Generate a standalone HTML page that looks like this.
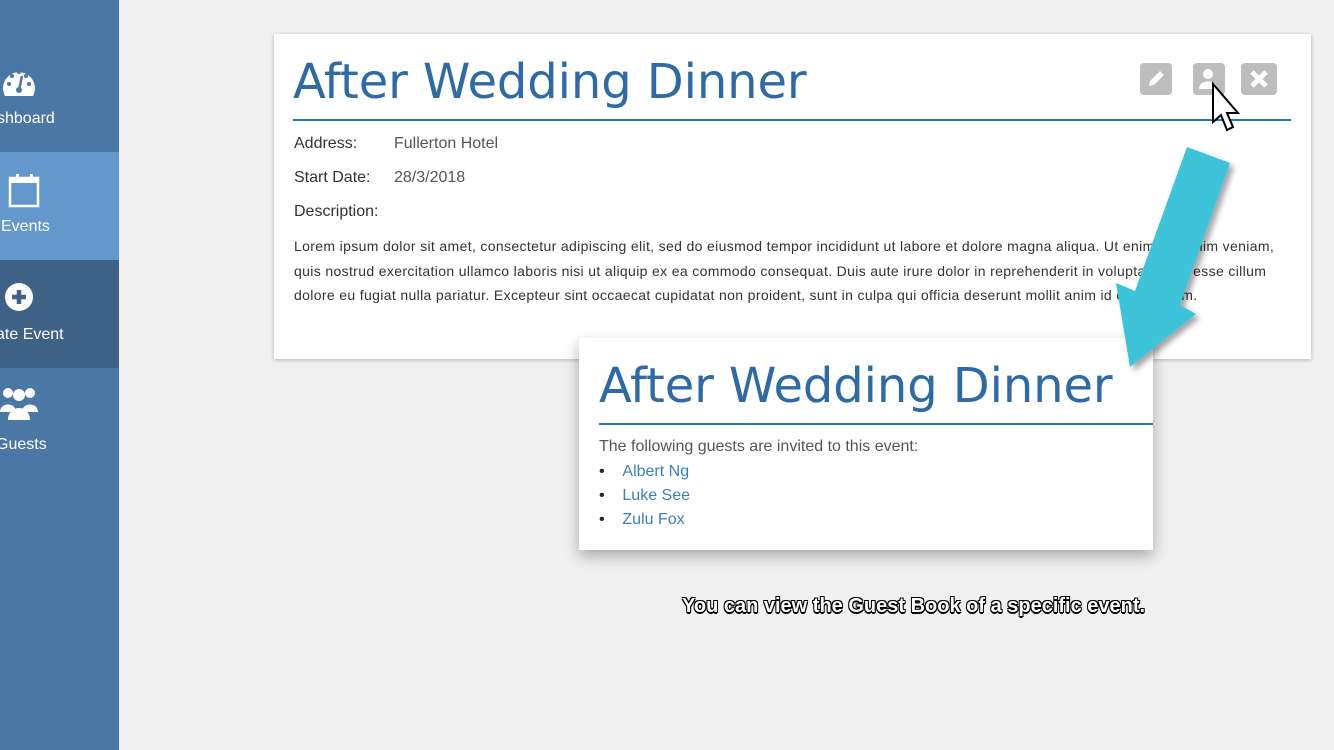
<!DOCTYPE html>
<html><head><style>
body{margin:0;width:1334px;height:750px;overflow:hidden;background:#f0f0f0;font-family:"Liberation Sans",sans-serif;position:relative}
.sb{position:absolute;left:0;top:0;width:119px;height:750px;background:#4a77a4}
.it{position:absolute;left:0;width:119px;height:108px;color:#fff;font-size:16px}
.it span{position:absolute;white-space:nowrap}
.card{position:absolute;background:#fff;box-shadow:0 1px 4px rgba(0,0,0,.25)}
h1{font-family:"DejaVu Sans","Liberation Sans",sans-serif;font-weight:normal;color:#2e6aa5;margin:0;letter-spacing:-0.1px}
.lbl{position:absolute;font-size:16px;color:#333}
.btn{position:absolute;top:63px;width:32px;height:32px;background:#bdbdbd;border-radius:4px}
</style></head><body>
<div class="sb">
 <div class="it" style="top:44px;background:#4a77a4"><svg style="position:absolute;left:2px;top:22px" width="34" height="32" viewBox="0 0 34 32"><path d="M3 30A16 16 0 1 1 31 30Z" fill="#fff"/><circle cx="17" cy="24" r="3" fill="#4a77a4"/><path d="M17 24L20 10" stroke="#4a77a4" stroke-width="2.5"/><circle cx="7" cy="18" r="2" fill="#4a77a4"/><circle cx="10" cy="10" r="2" fill="#4a77a4"/><circle cx="17" cy="6" r="2" fill="#4a77a4"/><circle cx="24" cy="10" r="2" fill="#4a77a4"/><circle cx="27" cy="18" r="2" fill="#4a77a4"/></svg><span style="left:-3px;top:66px">shboard</span></div>
 <div class="it" style="top:152px;background:#6497cc"><svg style="position:absolute;left:8px;top:20px" width="34" height="36" viewBox="0 0 34 36"><rect x="2" y="6" width="28" height="28" fill="none" stroke="#fff" stroke-width="2.5"/><rect x="2" y="6" width="28" height="5" fill="#fff"/><rect x="8" y="2" width="3" height="8" fill="#fff"/><rect x="22" y="2" width="3" height="8" fill="#fff"/></svg><span style="left:1px;top:66px">Events</span></div>
 <div class="it" style="top:260px;background:#3e6286"><svg style="position:absolute;left:4px;top:22px" width="30" height="30" viewBox="0 0 30 30"><circle cx="15" cy="15" r="14" fill="#fff"/><path d="M15 8V22M8 15H22" stroke="#3e6286" stroke-width="4.5"/></svg><span style="left:-4px;top:66px">ate Event</span></div>
 <div class="it" style="top:368px"><svg style="position:absolute;left:0;top:16px" width="40" height="38" viewBox="0 0 40 38"><circle cx="8" cy="9" r="5" fill="#fff"/><circle cx="30" cy="9" r="5" fill="#fff"/><circle cx="19" cy="11" r="6" fill="#fff"/><path d="M0 28C0 18 16 18 16 28Z M22 28C22 18 38 18 38 28Z" fill="#fff"/><path d="M8 36C8 20 30 20 30 36Z" fill="#fff"/></svg><span style="left:-4px;top:68px">Guests</span></div>
</div>

<div class="card" style="left:274px;top:34px;width:1037px;height:325px">
 <h1 style="position:absolute;left:19px;top:20px;font-size:48px">After Wedding Dinner</h1>
 <div style="position:absolute;left:19px;top:85px;width:998px;height:2px;background:#1e7bab"></div>
 <div class="lbl" style="left:20px;top:101px">Address:</div><div class="lbl" style="left:120px;top:101px;color:#555">Fullerton Hotel</div>
 <div class="lbl" style="left:20px;top:135px">Start Date:</div><div class="lbl" style="left:120px;top:135px;color:#555">28/3/2018</div>
 <div class="lbl" style="left:20px;top:169px">Description:</div>
 <div style="position:absolute;left:20px;top:200px;width:1010px;white-space:nowrap;font-family:'Liberation Sans',sans-serif;font-size:14px;line-height:24.5px;color:#333;letter-spacing:0.35px">Lorem ipsum dolor sit amet, consectetur adipiscing elit, sed do eiusmod tempor incididunt ut labore et dolore magna aliqua. Ut enim ad minim veniam,<br>quis nostrud exercitation ullamco laboris nisi ut aliquip ex ea commodo consequat. Duis aute irure dolor in reprehenderit in voluptate velit esse cillum<br>dolore eu fugiat nulla pariatur. Excepteur sint occaecat cupidatat non proident, sunt in culpa qui officia deserunt mollit anim id est laborum.</div>
</div>
<div class="btn" style="left:1140px"><svg width="32" height="32" viewBox="0 0 32 32"><path d="M9 23L10 18L20 8L24 12L14 22Z" fill="#fff"/></svg></div>
<div class="btn" style="left:1193px"><svg width="32" height="32" viewBox="0 0 32 32"><circle cx="15" cy="11" r="5" fill="#fff"/><path d="M6 26C6 16 24 16 24 26Z" fill="#fff"/></svg></div>
<div class="btn" style="left:1241px;width:36px"><svg width="36" height="32" viewBox="0 0 36 32"><path d="M11 9L25 23M25 9L11 23" stroke="#fff" stroke-width="5"/></svg></div>

<div class="card" style="left:579px;top:338px;width:574px;height:212px;box-shadow:0 6px 14px rgba(0,0,0,.3)">
 <h1 style="position:absolute;left:20px;top:20px;font-size:48px">After Wedding Dinner</h1>
 <div style="position:absolute;left:20px;top:85px;width:554px;height:2px;background:#1e7bab"></div>
 <div style="position:absolute;left:20px;top:100px;font-size:16px;color:#555">The following guests are invited to this event:</div>
 <ul style="position:absolute;left:0;top:122px;margin:0;padding-left:20px;list-style:none;font-size:16px;line-height:24px;color:#3a80c0">
  <li><span style="color:#222">•</span>&nbsp;&nbsp;&nbsp;&nbsp;Albert Ng</li><li><span style="color:#222">•</span>&nbsp;&nbsp;&nbsp;&nbsp;Luke See</li><li><span style="color:#222">•</span>&nbsp;&nbsp;&nbsp;&nbsp;Zulu Fox</li></ul>
</div>

<svg style="position:absolute;left:0;top:0" width="1334" height="750"><defs><filter id="s"><feDropShadow dx="4" dy="4" stdDeviation="3" flood-opacity=".35"/></filter></defs>
<polygon points="1187,147 1230,163 1180,305 1196,314 1130,367 1116,283 1135,291" fill="#3ec3da" filter="url(#s)"/>
<path d="M1213 84L1213 122L1221 115L1227 130L1233 127L1227 113L1238 113Z" fill="#fff" stroke="#000" stroke-width="2"/>
</svg>
<div style="position:absolute;left:682px;top:595px;font-size:20px;font-weight:bold;color:#fff;letter-spacing:0px;text-shadow:-1px -1px 0 #000,1px -1px 0 #000,-1px 1px 0 #000,1px 1px 0 #000,0 2px 0 #000">You can view the Guest Book of a specific event.</div>
</body></html>
